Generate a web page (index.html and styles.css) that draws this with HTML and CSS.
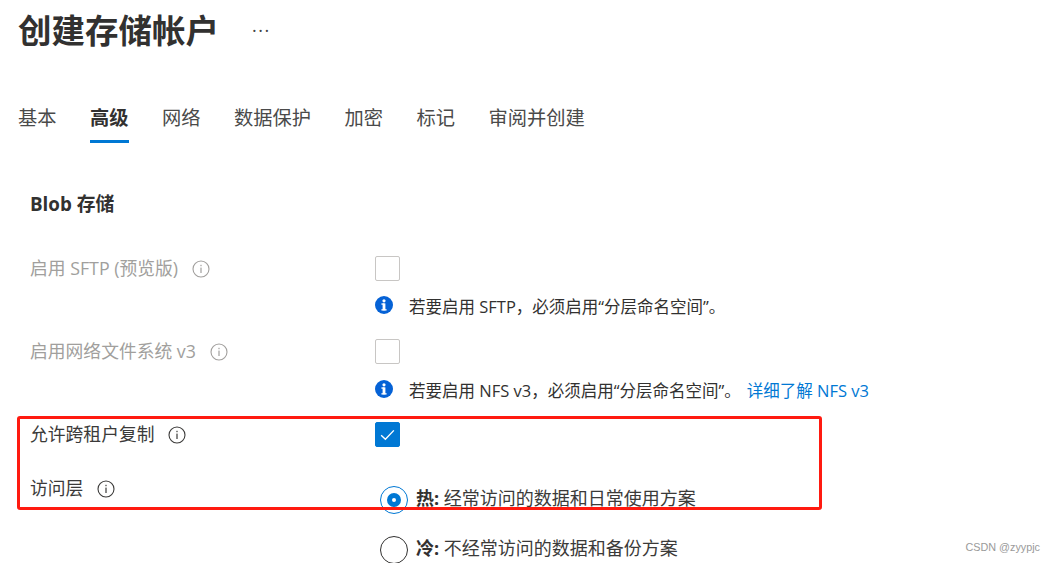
FILE: index.html
```html
<!DOCTYPE html>
<html lang="zh-CN">
<head>
<meta charset="utf-8">
<title>创建存储帐户</title>
<link rel="stylesheet" href="styles.css">
</head>
<body>
<main class="page">
  <header class="title-row">
    <h1 class="title">创建存储帐户</h1>
    <span class="more">···</span>
  </header>
  <nav class="tabs">
    <span class="tab">基本</span>
    <span class="tab tab-active">高级</span>
    <span class="tab">网络</span>
    <span class="tab">数据保护</span>
    <span class="tab">加密</span>
    <span class="tab">标记</span>
    <span class="tab">审阅并创建</span>
  </nav>
  <section class="form">
    <h2 class="section-title">Blob 存储</h2>

    <div class="row row-sftp">
      <div class="label label-disabled">启用 SFTP (预览版)
        <svg class="info-o" viewBox="0 0 18 18"><circle cx="9" cy="9" r="8" fill="none" stroke="currentColor" stroke-width="1.1"/><rect x="8.4" y="7.6" width="1.2" height="5.4" fill="currentColor"/><rect x="8.4" y="4.8" width="1.2" height="1.4" fill="currentColor"/></svg>
      </div>
      <div class="control"><span class="check"></span></div>
    </div>
    <div class="note-row note-sftp">
      <svg class="info-f" viewBox="0 0 18 18"><circle cx="9" cy="9" r="9" fill="#0562d6"/><rect x="7.6" y="7.4" width="2.8" height="7" fill="#fff"/><rect x="6.4" y="7.4" width="3" height="1.3" fill="#fff"/><rect x="6.4" y="13.2" width="5.2" height="1.3" fill="#fff"/><circle cx="9" cy="4.8" r="1.6" fill="#fff"/></svg>
      <span class="note">若要启用 SFTP，必须启用“分层命名空间”。</span>
    </div>

    <div class="row row-nfs">
      <div class="label label-disabled">启用网络文件系统 v3
        <svg class="info-o" viewBox="0 0 18 18"><circle cx="9" cy="9" r="8" fill="none" stroke="currentColor" stroke-width="1.1"/><rect x="8.4" y="7.6" width="1.2" height="5.4" fill="currentColor"/><rect x="8.4" y="4.8" width="1.2" height="1.4" fill="currentColor"/></svg>
      </div>
      <div class="control"><span class="check"></span></div>
    </div>
    <div class="note-row note-nfs">
      <svg class="info-f" viewBox="0 0 18 18"><circle cx="9" cy="9" r="9" fill="#0562d6"/><rect x="7.6" y="7.4" width="2.8" height="7" fill="#fff"/><rect x="6.4" y="7.4" width="3" height="1.3" fill="#fff"/><rect x="6.4" y="13.2" width="5.2" height="1.3" fill="#fff"/><circle cx="9" cy="4.8" r="1.6" fill="#fff"/></svg>
      <span class="note">若要启用 NFS v3，必须启用“分层命名空间”。</span>
      <a class="link">详细了解 NFS v3</a>
    </div>

    <div class="row row-cross">
      <div class="label">允许跨租户复制
        <svg class="info-o" viewBox="0 0 18 18"><circle cx="9" cy="9" r="8" fill="none" stroke="currentColor" stroke-width="1.1"/><rect x="8.4" y="7.6" width="1.2" height="5.4" fill="currentColor"/><rect x="8.4" y="4.8" width="1.2" height="1.4" fill="currentColor"/></svg>
      </div>
      <div class="control">
        <span class="check check-on"><svg viewBox="0 0 25 25"><path d="M5.6 13.2l4.6 4.4 9.2-9.6" fill="none" stroke="#fff" stroke-width="1.5"/></svg></span>
      </div>
    </div>

    <div class="row row-tier">
      <div class="label label-tier">访问层
        <svg class="info-o" viewBox="0 0 18 18"><circle cx="9" cy="9" r="8" fill="none" stroke="currentColor" stroke-width="1.1"/><rect x="8.4" y="7.6" width="1.2" height="5.4" fill="currentColor"/><rect x="8.4" y="4.8" width="1.2" height="1.4" fill="currentColor"/></svg>
      </div>
      <div class="radios">
        <div class="radio-row">
          <span class="radio radio-on"><span class="radio-dot"></span></span>
          <span class="radio-text"><b>热:</b> 经常访问的数据和日常使用方案</span>
        </div>
        <div class="radio-row">
          <span class="radio"></span>
          <span class="radio-text"><b>冷:</b> 不经常访问的数据和备份方案</span>
        </div>
      </div>
    </div>
  </section>
</main>
<div class="annotation"></div>
<div class="watermark">CSDN @zyypjc</div>
</body>
</html>
```
FILE: styles.css
```css
html, body {
  margin: 0;
  padding: 0;
  background: #fff;
}
body {
  width: 1055px;
  height: 563px;
  overflow: hidden;
  position: relative;
  font-family: "Open Sans", "Noto Sans CJK SC", sans-serif;
  color: #323130;
}
.page {
  padding: 0 0 0 18px;
}
.title-row {
  display: flex;
  align-items: center;
  height: 60px;
}
.title {
  margin: 0;
  font-size: 33.5px;
  line-height: 60px;
  font-weight: 700;
  color: #323130;
}
.more {
  margin-left: 33px;
  font-size: 18px;
  line-height: 20px;
  letter-spacing: 1.5px;
  color: #444;
}
.tabs {
  display: flex;
  gap: 33.5px;
  margin-top: 40px;
  height: 43px;
}
.tab {
  font-size: 19.25px;
  line-height: 36px;
  height: 43px;
  box-sizing: border-box;
  color: #4a4a4a;
  white-space: nowrap;
}
.tab-active {
  font-weight: 700;
  color: #323130;
  border-bottom: 3px solid #0078d4;
}
.form {
  padding-left: 12px;
}
.section-title {
  margin: 47px 0 0;
  font-size: 18.8px;
  line-height: 28px;
  font-weight: 700;
  color: #323130;
}
.row {
  display: flex;
  align-items: flex-start;
}
.label {
  width: 345px;
  flex: none;
  display: flex;
  align-items: center;
  gap: 14px;
  font-size: 17.8px;
  line-height: 25px;
  color: #3b3a39;
  white-space: nowrap;
}
.label-disabled {
  color: #a19f9d;
}
.info-o {
  width: 18px;
  height: 18px;
  flex: none;
}
.check {
  display: block;
  width: 25px;
  height: 25px;
  box-sizing: border-box;
  border: 1px solid #c8c6c4;
  border-radius: 2px;
  background: #fff;
}
.check-on {
  background: #0078d4;
  border-color: #0078d4;
}
.check-on svg {
  display: block;
  width: 23px;
  height: 23px;
}
.row-sftp {
  margin-top: 38px;
}
.note-row {
  display: flex;
  align-items: center;
  margin-left: 345px;
  height: 24px;
}
.note-sftp {
  margin-top: 14px;
}
.note-nfs {
  margin-top: 15px;
}
.info-f {
  width: 18px;
  height: 18px;
  flex: none;
  margin-top: -4px;
  margin-right: 16px;
}
.note {
  font-size: 16.5px;
  line-height: 24px;
  color: #323130;
  white-space: nowrap;
}
.link {
  margin-left: 6px;
  font-size: 16.5px;
  line-height: 24px;
  color: #0078d4;
  white-space: nowrap;
}
.row-nfs {
  margin-top: 20px;
}
.row-cross {
  margin-top: 19px;
}
.label-tier {
  margin-top: 29px;
}
.radios {
  margin-top: 39px;
  padding-left: 5px;
}
.radio-row {
  display: flex;
  align-items: center;
  gap: 8px;
  height: 28px;
  margin-bottom: 22px;
}
.radio {
  display: flex;
  align-items: center;
  justify-content: center;
  width: 28px;
  height: 28px;
  box-sizing: border-box;
  border: 1px solid #323130;
  border-radius: 50%;
  flex: none;
}
.radio-on {
  border-color: #0078d4;
}
.radio-dot {
  width: 14px;
  height: 14px;
  box-sizing: border-box;
  border-radius: 50%;
  background: #fff;
  border: 5.5px solid #0078d4;
}
.radio-text {
  margin-top: -5px;
  font-size: 18px;
  line-height: 28px;
  color: #3b3a39;
  white-space: nowrap;
}
.radio-text b {
  font-weight: 700;
  color: #323130;
}
.annotation {
  position: absolute;
  left: 17px;
  top: 416px;
  width: 805px;
  height: 94px;
  box-sizing: border-box;
  border: 3px solid #ff1a10;
  border-radius: 3px;
  pointer-events: none;
}
.watermark {
  position: absolute;
  right: 15px;
  top: 540px;
  font-family: "Liberation Sans", sans-serif;
  font-size: 10.8px;
  line-height: 14px;
  color: #9a9a9a;
}
```
